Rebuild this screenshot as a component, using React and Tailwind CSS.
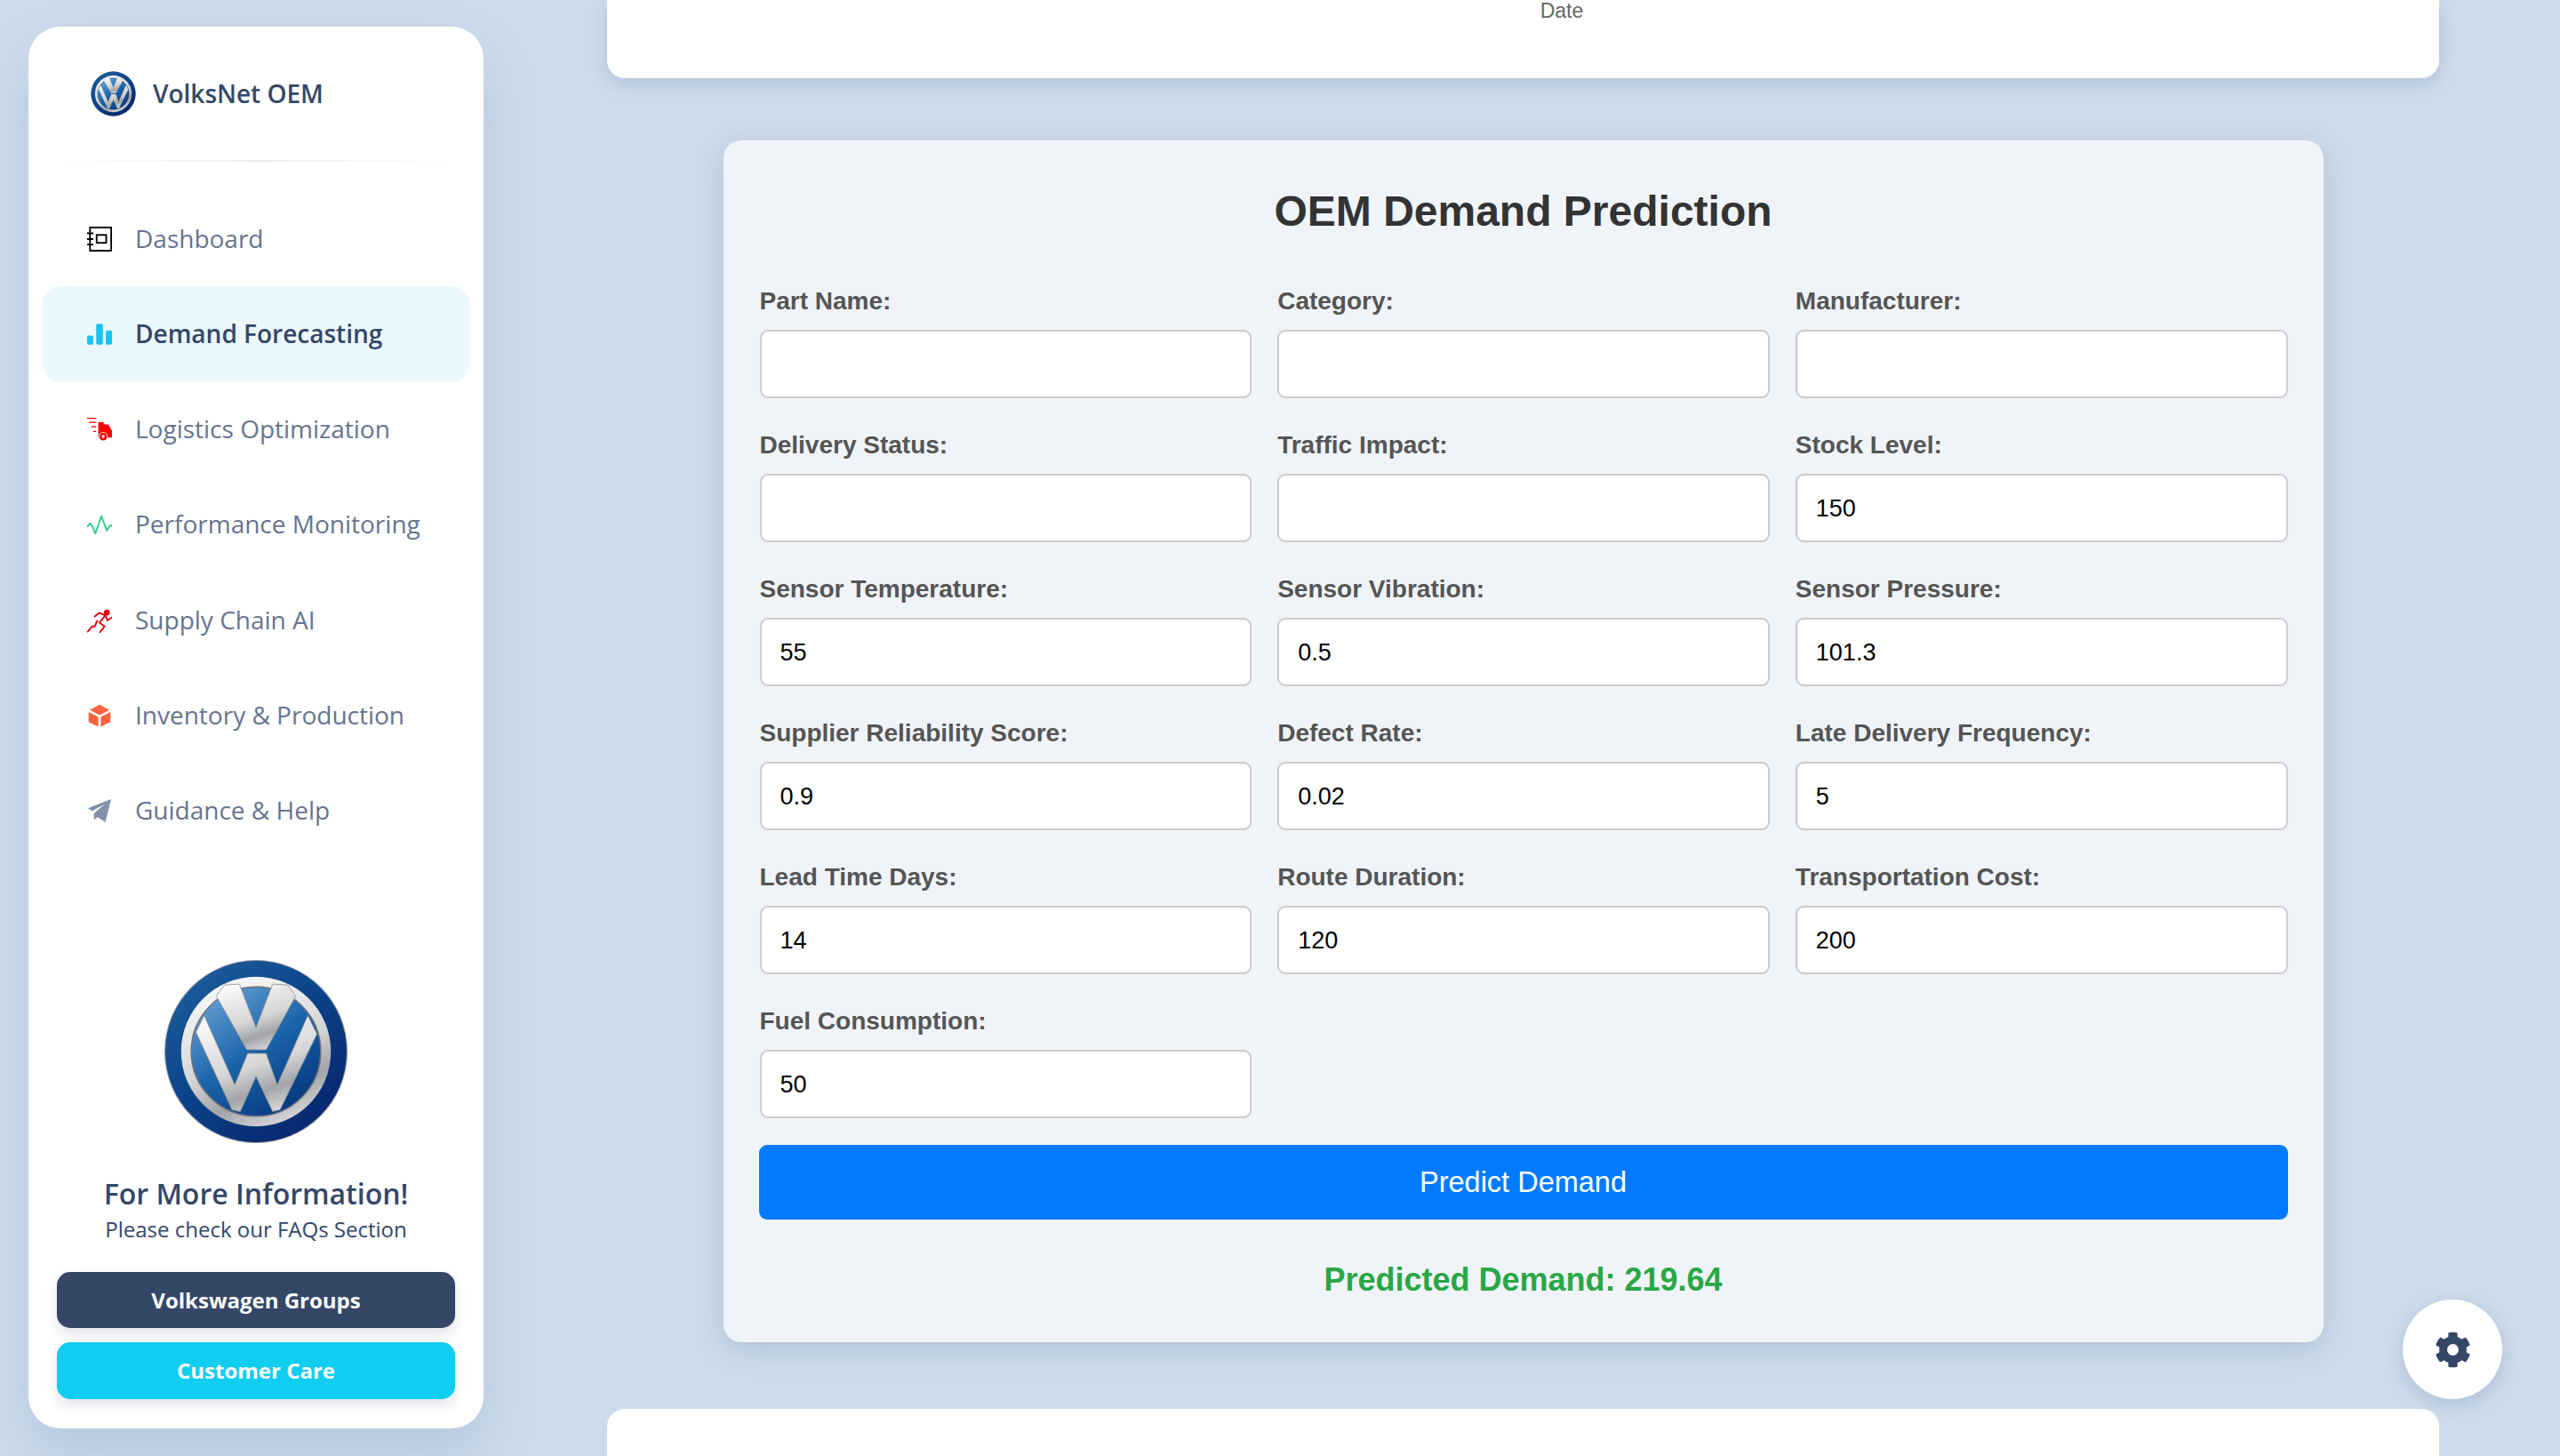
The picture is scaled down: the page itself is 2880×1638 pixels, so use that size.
import React from 'react'
import { FaCog } from 'react-icons/fa'

const VwLogo = ({ className, id }) => (
    <svg viewBox="0 0 200 200" className={className}>
        <defs>
            <linearGradient id={`${id}-outer`} x1="0.1" y1="0" x2="0.9" y2="1">
                <stop offset="0" stopColor="#1f5f9f" />
                <stop offset="0.45" stopColor="#0b4489" />
                <stop offset="1" stopColor="#08226a" />
            </linearGradient>
            <linearGradient id={`${id}-silver`} x1="0.2" y1="0" x2="0.6" y2="1">
                <stop offset="0" stopColor="#fbfbfb" />
                <stop offset="0.55" stopColor="#d6d6d8" />
                <stop offset="0.8" stopColor="#a2a4a7" />
                <stop offset="1" stopColor="#d4d4d6" />
            </linearGradient>
            <linearGradient id={`${id}-inner`} x1="0.15" y1="0.1" x2="0.75" y2="0.95">
                <stop offset="0" stopColor="#5f9bd0" />
                <stop offset="0.5" stopColor="#1a63aa" />
                <stop offset="1" stopColor="#063a80" />
            </linearGradient>
        </defs>
        <circle cx="100" cy="100" r="99" fill="#8a8f98" />
        <circle cx="100" cy="100" r="98" fill={`url(#${id}-outer)`} />
        <circle cx="100" cy="100" r="81" fill={`url(#${id}-silver)`} />
        <circle cx="100" cy="100" r="70" fill={`url(#${id}-inner)`} stroke="#6f7176" strokeWidth="1.5" />
        <polygon points="66,28 82,27 100,74 118,27 134,28 143,40 111,98 90,98 57,40" fill={`url(#${id}-silver)`} stroke="#8b8d92" strokeWidth="0.8" />
        <polygon points="35,79 74,163 83,165 100,127 118,165 126,163 166,81 156,61 123,136 111,102 91,102 77,136 44,61" fill={`url(#${id}-silver)`} stroke="#8b8d92" strokeWidth="0.8" />
    </svg>
)

const NotebookIcon = () => (
    <svg viewBox="0 0 30 30" className="w-[28px] h-[28px]" fill="none" stroke="#000" strokeWidth="2">
        <rect x="3.5" y="1" width="25.5" height="28" />
        <rect x="11.5" y="10" width="11.5" height="9.5" />
        <path d="M0 8h7.5M0 15h7.5M0 21.5h7.5" />
    </svg>
)

const BarsIcon = () => (
    <svg viewBox="0 0 30 30" className="w-[28px] h-[28px]" fill="#18c4ee">
        <rect x="0" y="16.5" width="7.5" height="11" rx="2" />
        <rect x="11" y="2.5" width="8" height="25" rx="2" />
        <rect x="22.5" y="10.5" width="7.5" height="17" rx="2" />
    </svg>
)

const TruckIcon = () => (
    <svg viewBox="0 0 30 30" className="w-[28px] h-[28px]">
        <path d="M0 1h11v1.5H0zM2 5.8h9v1.5H2zM5 11.2h6v1.5H5zM7.3 16.8h3.7v1.5H7.3z" fill="#ff0000" />
        <polygon points="13.5,6.5 20,6.5 20,9 25.6,9 30,17 30,25 13.5,25" fill="#ff0000" />
        <circle cx="19.4" cy="23.7" r="5.6" fill="#fff" />
        <circle cx="19.4" cy="23.7" r="4.8" fill="#ff0000" />
        <circle cx="19.4" cy="23.7" r="1.9" fill="#fff" />
    </svg>
)

const PulseIcon = () => (
    <svg viewBox="0 0 30 30" className="w-[28px] h-[28px]" fill="none" stroke="#2dce89" strokeWidth="2" strokeLinejoin="round" strokeLinecap="round">
        <polyline points="0.5,17.2 3.7,13.6 6.3,17.2 9.9,25.9 17.2,5 23.8,22.3 27,17 30,16" />
    </svg>
)

const RunnerIcon = () => (
    <svg viewBox="0 0 30 30" className="w-[28px] h-[28px]" fill="none" stroke="#e8000f" strokeWidth="2" strokeLinejoin="round" strokeLinecap="round">
        <circle cx="23.8" cy="5.4" r="3.6" fill="#e8000f" stroke="none" />
        <polyline points="9.2,10.2 14.6,5.8 22,9 14.6,17.5 21.2,22.2 15.4,29.2" />
        <polyline points="22,9 24.5,14.9 30,11.2" />
        <polyline points="12,15.6 9.2,22.2 6.2,22.2 0.7,28.5" />
    </svg>
)

const BoxIcon = () => (
    <svg viewBox="0 0 30 30" className="w-[28px] h-[28px]" fill="#fb6340">
        <polygon points="15,2 26.8,8.2 15,14.4 3.3,8.2" />
        <polygon points="1.8,10.8 13.5,16.6 13.5,28.4 1.8,22.9" />
        <polygon points="16.5,16.6 28.2,10.8 28.2,22.9 16.5,28.4" />
    </svg>
)

const PlaneIcon = () => (
    <svg viewBox="0 0 30 30" className="w-[28px] h-[28px]" fill="#8392ab">
        <polygon points="29,1 1,12 6.2,15.6 20.8,7.2 8.3,18.1 8.3,26.5 12.7,22.9 21.9,29" />
    </svg>
)

const navItems = [
    { label: 'Dashboard', icon: <NotebookIcon /> },
    { label: 'Demand Forecasting', icon: <BarsIcon />, active: true },
    { label: 'Logistics Optimization', icon: <TruckIcon /> },
    { label: 'Performance Monitoring', icon: <PulseIcon /> },
    { label: 'Supply Chain AI', icon: <RunnerIcon /> },
    { label: 'Inventory & Production', icon: <BoxIcon /> },
    { label: 'Guidance & Help', icon: <PlaneIcon /> },
]

const fields = [
    { label: 'Part Name:', value: '' },
    { label: 'Category:', value: '' },
    { label: 'Manufacturer:', value: '' },
    { label: 'Delivery Status:', value: '' },
    { label: 'Traffic Impact:', value: '' },
    { label: 'Stock Level:', value: '150' },
    { label: 'Sensor Temperature:', value: '55' },
    { label: 'Sensor Vibration:', value: '0.5' },
    { label: 'Sensor Pressure:', value: '101.3' },
    { label: 'Supplier Reliability Score:', value: '0.9' },
    { label: 'Defect Rate:', value: '0.02' },
    { label: 'Late Delivery Frequency:', value: '5' },
    { label: 'Lead Time Days:', value: '14' },
    { label: 'Route Duration:', value: '120' },
    { label: 'Transportation Cost:', value: '200' },
    { label: 'Fuel Consumption:', value: '50' },
]

const Sidebar = () => (
    <aside className="w-[512px] h-[1577px] ml-[32px] mt-[30px] shrink-0 bg-white rounded-[36px] shadow-[0_30px_60px_rgba(80,110,150,0.18)] flex flex-col font-['Open_Sans',sans-serif]">
        {/* LOGO */}
        <div className="h-[152px] flex flex-col">
            <div className="flex-1 flex items-center pl-[70px] gap-[19px]">
                <VwLogo id="small" className="w-[51px] h-[51px]" />
                <span className="text-[28px] font-semibold text-[#344767]">VolksNet OEM</span>
            </div>
            <div className="h-[2px] mx-[30px] bg-gradient-to-r from-transparent via-[#eeeeee] to-transparent" />
        </div>

        {/* NAV LINKS */}
        <nav className="mt-[33px] mx-[16px] flex flex-col gap-[0.3px]">
            {navItems.map(item => (
                <div
                    key={item.label}
                    className={`h-[107px] flex items-center pl-[50px] gap-[26px] rounded-[20px] text-[28px] ${item.active ? 'bg-[#ebf8fd] text-[#344767] font-semibold' : 'text-[#67748e]'}`}
                >
                    {item.icon}
                    <span className="pb-[2px]">{item.label}</span>
                </div>
            ))}
        </nav>

        {/* HELP */}
        <div className="mt-auto flex flex-col items-center px-[32px] pb-[33px]">
            <VwLogo id="large" className="w-[208px] h-[208px]" />
            <h3 className="mt-[36px] text-[32px] leading-[40px] font-semibold text-[#344767]">For More Information!</h3>
            <p className="mt-[3px] text-[24px] leading-[34px] text-[#344767]">Please check our FAQs Section</p>
            <button className="mt-[31px] w-full h-[63px] rounded-[15px] bg-[#344767] text-white text-[24px] font-bold shadow-[0_6px_14px_rgba(50,50,93,0.15)]">
                Volkswagen Groups
            </button>
            <button className="mt-[16px] w-full h-[64px] rounded-[15px] bg-[#11cdef] text-white text-[24px] font-bold shadow-[0_6px_14px_rgba(50,50,93,0.15)]">
                Customer Care
            </button>
        </div>
    </aside>
)

const PredictionForm = () => (
    <div className="w-[1800px] h-[1352px] mx-auto mt-[70px] px-[40px] bg-[#f0f4f9] rounded-[20px] shadow-[0_8px_32px_rgba(60,90,130,0.2)] font-['Liberation_Sans',sans-serif]">
        <h2 className="pt-[51px] h-[158px] text-center text-[48px] leading-[58px] font-bold text-[#333333]">OEM Demand Prediction</h2>
        <div className="grid grid-cols-3 gap-x-[29px] pl-[1px]">
            {fields.map(field => (
                <label key={field.label} className="h-[162px] flex flex-col">
                    <span className="mt-[7px] h-[48px] text-[28px] leading-[32px] font-bold text-[#555555]">{field.label}</span>
                    <input
                        readOnly
                        value={field.value}
                        className="h-[77px] w-full pl-[21px] pr-[21px] pt-[2px] bg-white border-2 border-[#cccccc] rounded-[9px] text-[27px] text-black outline-none"
                    />
                </label>
            ))}
        </div>
        <button className="w-full h-[84px] bg-[#007bff] rounded-[9px] text-white text-[32.5px]">
            Predict Demand
        </button>
        <p className="mt-[46px] text-center text-[36px] leading-[44px] font-bold text-[#28a745]">Predicted Demand: 219.64</p>
    </div>
)

const App = () => (
    <div className="relative w-[2880px] h-[1638px] overflow-hidden bg-[#cddcec] flex">
        <Sidebar />

        <main className="flex-1 pl-[139px] pr-[136px]">
            <div className="h-[88px] pl-[87px] bg-white rounded-b-[20px] shadow-[0_6px_20px_rgba(60,90,130,0.2)] text-center font-['Liberation_Sans',sans-serif] text-[23px] leading-[24px] text-[#666666]">
                Date
            </div>
            <PredictionForm />
            <div className="h-[100px] mt-[75px] bg-white rounded-t-[20px]" />
        </main>

        {/* SETTINGS */}
        <button className="absolute left-[2703px] top-[1462px] w-[112px] h-[112px] rounded-full bg-white flex items-center justify-center text-[#344767] shadow-[0_6px_20px_rgba(60,90,130,0.22)]">
            <FaCog size={41} />
        </button>
    </div>
)

export default App
